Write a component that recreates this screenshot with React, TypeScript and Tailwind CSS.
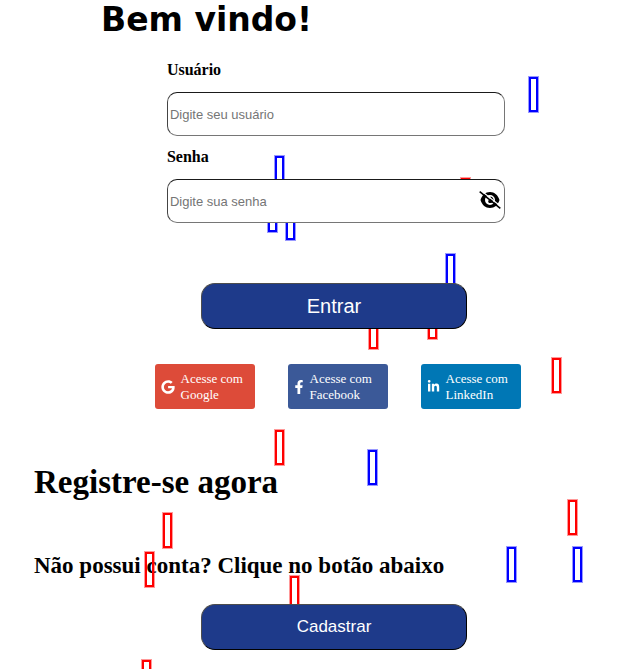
import { useState } from "react";
import { FaFacebookF, FaGoogle, FaLinkedinIn } from "react-icons/fa";

const serif = "font-['Liberation_Serif',serif]";
const sans = "font-['Liberation_Sans',sans-serif]";

type Piece = { x: number; y: number; tone: "red" | "blue" };

const confetti: Piece[] = [
  { x: 529, y: 77, tone: "blue" },
  { x: 275, y: 156, tone: "blue" },
  { x: 461, y: 178, tone: "red" },
  { x: 268, y: 197, tone: "blue" },
  { x: 286, y: 205, tone: "blue" },
  { x: 446, y: 254, tone: "blue" },
  { x: 428, y: 304, tone: "red" },
  { x: 369, y: 314, tone: "red" },
  { x: 552, y: 358, tone: "red" },
  { x: 275, y: 430, tone: "red" },
  { x: 368, y: 450, tone: "blue" },
  { x: 568, y: 500, tone: "red" },
  { x: 163, y: 513, tone: "red" },
  { x: 507, y: 547, tone: "blue" },
  { x: 573, y: 547, tone: "blue" },
  { x: 145, y: 552, tone: "red" },
  { x: 290, y: 576, tone: "red" },
  { x: 142, y: 660, tone: "red" },
];

const tones = {
  red: "border-[#ff0000] outline-[#ff0000]/40",
  blue: "border-[#0000ff] outline-[#0000ff]/40",
};

function Confetti() {
  return (
    <div aria-hidden="true" className="pointer-events-none absolute inset-0 overflow-hidden">
      {confetti.map((p) => (
        <span
          key={`${p.x}-${p.y}`}
          className={`absolute h-[35px] w-[9px] border-2 outline-1 ${tones[p.tone]}`}
          style={{ left: p.x, top: p.y }}
        />
      ))}
    </div>
  );
}

const field =
  "h-[44px] w-full rounded-[10px] border border-[#767676] border-t-[#1a1a1a] border-l-[#444444] bg-white px-[2px] text-[13px] text-black placeholder:text-[#757575] focus:outline-none";

const action =
  "relative z-10 mr-[4px] h-[46px] w-[44%] rounded-[14px] border border-t-[#4d4d4d] border-l-[#4d4d4d] border-r-black border-b-black bg-[#1e3a8a] text-white";

const social =
  "relative z-10 flex h-[45px] w-[100px] items-center rounded-[3px] px-[6px] text-[13px] leading-4 text-white";

function EyeOff() {
  return (
    <svg viewBox="0 0 22 18" className="h-[18px] w-[22px]" fill="none">
      <path
        fillRule="evenodd"
        fill="#000"
        d="M1.500 9C3 4 6.500 1 11 1S19 4 20.500 9c-1.500 5-5 8-9.500 8S3 14 1.500 9Zm4.500 0a5 5 0 1 0 10 0A5 5 0 1 0 6 9Z"
      />
      <path fill="#000" d="M11.500 5.500a3.300 3.300 0 1 1-2 6.100L9 9.500c1.500.3 2.800-1 2.500-4Z" />
      <path stroke="#fff" strokeWidth="1.200" d="M2.500 0 22 15.500" />
      <path stroke="#000" strokeWidth="1.600" d="M.7.7 21.300 17.300" />
    </svg>
  );
}

export default function App() {
  const [visible, setVisible] = useState(false);
  return (
    <div className={`relative min-h-screen bg-white text-black ${serif}`}>
      <Confetti />
      <main className="flex flex-col items-center pl-[34px] pb-[18px]">
        <h1 className="w-full pl-[67px] font-['DejaVu_Sans',sans-serif] text-[33px] leading-[39px] font-bold">
          Bem vindo!
        </h1>
        <form className="flex w-full flex-col items-center pt-5" onSubmit={(e) => e.preventDefault()}>
          <div className="w-[56%]">
            <label htmlFor="user" className="block pb-[11px] text-[16px] leading-[22px] font-bold">
              Usuário
            </label>
            <div className="relative z-10">
              <input id="user" type="text" placeholder="Digite seu usuário" className={`${field} ${sans}`} />
            </div>
            <label htmlFor="password" className="block pt-[10px] pb-[11px] text-[16px] leading-[22px] font-bold">
              Senha
            </label>
            <div className="relative z-10">
              <input
                id="password"
                type={visible ? "text" : "password"}
                placeholder="Digite sua senha"
                className={`${field} ${sans}`}
              />
              <button
                type="button"
                aria-label="Mostrar senha"
                onClick={() => setVisible(!visible)}
                className="absolute top-[12px] right-[4px]"
              >
                <EyeOff />
              </button>
            </div>
          </div>
          <button type="submit" className={`mt-[60px] text-[20px] ${action} ${sans}`}>
            Entrar
          </button>
        </form>
        <div className="flex gap-[33px] pt-[35px] pl-[3px]">
          <a href="#google" className={`bg-[#dd4b39] ${social}`}>
            <FaGoogle className="mr-[6px] size-[14px] shrink-0" />
            <span>Acesse com Google</span>
          </a>
          <a href="#facebook" className={`bg-[#3b5998] ${social}`}>
            <FaFacebookF className="mr-[6px] h-[14px] w-[10px] shrink-0" />
            <span>Acesse com Facebook</span>
          </a>
          <a href="#linkedin" className={`bg-[#0077b5] ${social}`}>
            <FaLinkedinIn className="mr-[6px] size-[13px] shrink-0" />
            <span>Acesse com LinkedIn</span>
          </a>
        </div>
        <h2 className="w-full pt-[53px] text-[33px] leading-[40px] font-bold">Registre-se agora</h2>
        <h3 className="w-full pt-[50px] text-[23px] leading-[28px] font-bold">
          Não possui conta? Clique no botão abaixo
        </h3>
        <button type="button" className={`mt-[24px] text-[17px] ${action} ${sans}`}>
          Cadastrar
        </button>
      </main>
    </div>
  );
}
